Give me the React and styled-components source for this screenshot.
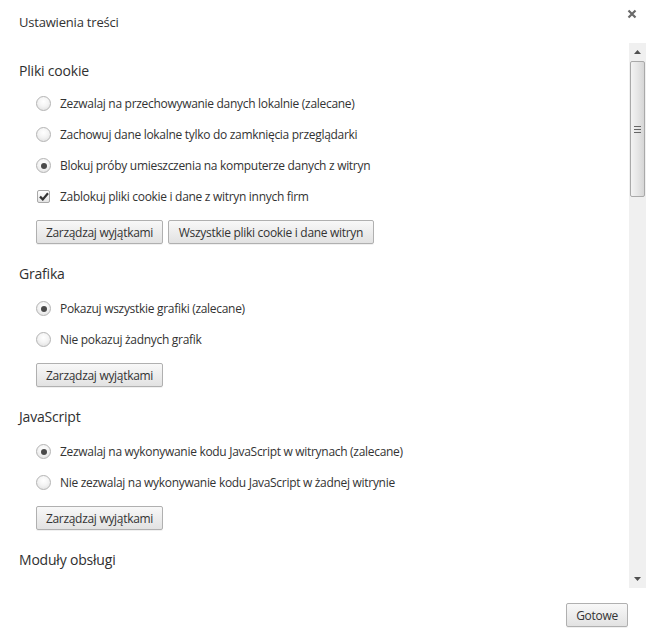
import React from "react";
import styled, { createGlobalStyle } from "styled-components";

const Global = createGlobalStyle`
  html, body { margin: 0; padding: 0; background: #fff; }
  body { font-family: "Open Sans", "Noto Sans", "Liberation Sans", sans-serif; color: #333; }
  * { box-sizing: border-box; }
`;

const Dialog = styled.div`
  width: 648px;
  height: 643px;
  display: flex;
  flex-direction: column;
  background: #fff;
  position: relative;
`;

const Header = styled.div`
  height: 43px;
  display: flex;
  justify-content: space-between;
  align-items: flex-start;
  padding: 12px 10px 0 19px;
`;

const Title = styled.h1`
  margin: 0;
  font-size: 13px;
  font-weight: 400;
  line-height: 20px;
  letter-spacing: -0.2px;
  color: #333;
`;

const Close = styled.button`
  border: 0;
  background: transparent;
  padding: 0;
  margin-top: -4px;
  width: 12px;
  height: 12px;
  display: flex;
  align-items: center;
  justify-content: center;
  cursor: pointer;
`;

const Body = styled.div`
  height: 545px;
  display: flex;
`;

const Content = styled.div`
  flex: 1;
  overflow: hidden;
  padding: 18px 0 0 19px;
  display: flex;
  flex-direction: column;
  gap: 20px;
`;

const Section = styled.section`
  display: flex;
  flex-direction: column;
`;

const Heading = styled.h2`
  margin: 0 0 ${(p) => p.$gap || 7}px;
  font-size: 14px;
  font-weight: 400;
  line-height: 20px;
  letter-spacing: -0.2px;
  color: #303030;
`;

const Options = styled.div`
  display: flex;
  flex-direction: column;
  padding-left: 17px;
`;

const Row = styled.label`
  height: 31px;
  display: flex;
  align-items: center;
  gap: 9px;
  font-size: 12px;
  letter-spacing: -0.3px;
  white-space: nowrap;
  color: #333;
`;

const RadioCircle = styled.span`
  width: 15px;
  height: 15px;
  border-radius: 50%;
  border: 1px solid #b4b4b4;
  background: radial-gradient(circle at 50% 35%, #ffffff 0%, #f4f4f4 45%, #dcdcdc 100%);
  display: flex;
  align-items: center;
  justify-content: center;
  flex-shrink: 0;
  &::after {
    content: "";
    width: 6px;
    height: 6px;
    border-radius: 50%;
    background: ${(p) => (p.$checked ? "#4a4a4a" : "transparent")};
  }
`;

const CheckBox = styled.span`
  width: 13px;
  height: 13px;
  margin-left: 1px;
  margin-right: 1px;
  border: 1px solid #a8a8a8;
  border-radius: 2px;
  background: linear-gradient(#ffffff, #e4e4e4);
  display: flex;
  align-items: center;
  justify-content: center;
  flex-shrink: 0;
`;

const Buttons = styled.div`
  display: flex;
  gap: 5px;
  padding-left: 17px;
  margin-top: 8px;
`;

const Button = styled.button`
  height: 24px;
  padding: 0 4px;
  font-family: inherit;
  font-size: 12px;
  letter-spacing: -0.3px;
  white-space: nowrap;
  color: #333;
  border: 1px solid #b0b0b0;
  border-radius: 2px;
  background: linear-gradient(#f8f8f8, #e2e2e2);
  box-shadow: 0 1px 0 rgba(0, 0, 0, 0.06);
  cursor: pointer;
  width: ${(p) => p.$w || "auto"};
`;

const Scrollbar = styled.div`
  width: 17px;
  margin-right: 2px;
  display: flex;
  flex-direction: column;
  background: #f0f0f0;
`;

const Arrow = styled.div`
  height: 18px;
  display: flex;
  align-items: center;
  justify-content: center;
  flex-shrink: 0;
`;

const Track = styled.div`
  flex: 1;
  display: flex;
  flex-direction: column;
`;

const Thumb = styled.div`
  height: 136px;
  margin: 0 1px;
  border: 1px solid #a9a9a9;
  border-radius: 2px;
  background: linear-gradient(90deg, #f3f3f3, #e6e6e6 50%, #d6d6d6);
  display: flex;
  align-items: center;
  justify-content: center;
`;

const Footer = styled.div`
  flex: 1;
  display: flex;
  justify-content: flex-end;
  align-items: flex-start;
  padding: 15px 20px 0 0;
`;

const Radio = ({ checked, children }) => (
  <Row>
    <RadioCircle $checked={checked} />
    {children}
  </Row>
);

const Check = ({ children }) => (
  <Row>
    <CheckBox>
      <svg width="10" height="9" viewBox="0 0 10 9">
        <path d="M1 4.6 L3.8 7.4 L9 1.2" fill="none" stroke="#333" strokeWidth="2.2" />
      </svg>
    </CheckBox>
    {children}
  </Row>
);

export default function App() {
  return (
    <>
      <Global />
      <Dialog>
        <Header>
          <Title>Ustawienia treści</Title>
          <Close aria-label="Zamknij">
            <svg width="10" height="10" viewBox="0 0 10 10">
              <path d="M1.5 1.5 L8.5 8.5 M8.5 1.5 L1.5 8.5" stroke="#6a6a6a" strokeWidth="2.2" />
            </svg>
          </Close>
        </Header>
        <Body>
          <Content>
            <Section>
              <Heading>Pliki cookie</Heading>
              <Options>
                <Radio>Zezwalaj na przechowywanie danych lokalnie (zalecane)</Radio>
                <Radio>Zachowuj dane lokalne tylko do zamknięcia przeglądarki</Radio>
                <Radio checked>Blokuj próby umieszczenia na komputerze danych z witryn</Radio>
                <Check>Zablokuj pliki cookie i dane z witryn innych firm</Check>
              </Options>
              <Buttons>
                <Button $w="127px">Zarządzaj wyjątkami</Button>
                <Button $w="206px">Wszystkie pliki cookie i dane witryn</Button>
              </Buttons>
            </Section>
            <Section>
              <Heading $gap={9}>Grafika</Heading>
              <Options>
                <Radio checked>Pokazuj wszystkie grafiki (zalecane)</Radio>
                <Radio>Nie pokazuj żadnych grafik</Radio>
              </Options>
              <Buttons>
                <Button $w="127px">Zarządzaj wyjątkami</Button>
              </Buttons>
            </Section>
            <Section>
              <Heading $gap={9}>JavaScript</Heading>
              <Options>
                <Radio checked>Zezwalaj na wykonywanie kodu JavaScript w witrynach (zalecane)</Radio>
                <Radio>Nie zezwalaj na wykonywanie kodu JavaScript w żadnej witrynie</Radio>
              </Options>
              <Buttons>
                <Button $w="127px">Zarządzaj wyjątkami</Button>
              </Buttons>
            </Section>
            <Section>
              <Heading>Moduły obsługi</Heading>
            </Section>
          </Content>
          <Scrollbar>
            <Arrow>
              <svg width="7" height="4" viewBox="0 0 7 4"><path d="M0 4 L3.5 0 L7 4 Z" fill="#505050" /></svg>
            </Arrow>
            <Track>
              <Thumb>
                <svg width="7" height="7" viewBox="0 0 7 7">
                  <path d="M0 0.5 H7 M0 3.5 H7 M0 6.5 H7" stroke="#666" strokeWidth="1" />
                </svg>
              </Thumb>
            </Track>
            <Arrow>
              <svg width="7" height="4" viewBox="0 0 7 4"><path d="M0 0 L7 0 L3.5 4 Z" fill="#505050" /></svg>
            </Arrow>
          </Scrollbar>
        </Body>
        <Footer>
          <Button $w="62px">Gotowe</Button>
        </Footer>
      </Dialog>
    </>
  );
}
